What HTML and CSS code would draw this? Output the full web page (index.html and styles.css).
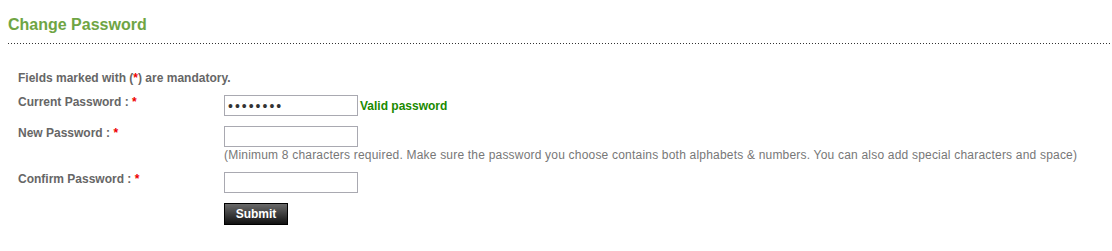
FILE: index.html
```html
<!DOCTYPE html>
<html lang="en">

<head>
    <meta charset="UTF-8">
    <title>Change Password</title>
    <link rel="stylesheet" href="styles.css">
</head>

<body>
    <div class="page">
        <h2 class="title">Change Password</h2>
        <div class="dots"></div>

        <form class="pwd-form">
            <p class="note">Fields marked with (<span class="req">*</span>) are mandatory.</p>

            <div class="row">
                <label class="label">Current Password : <span class="req">*</span></label>
                <div class="field">
                    <div class="inline">
                        <input type="password" class="box" value="secret12">
                        <span class="valid">Valid password</span>
                    </div>
                </div>
            </div>

            <div class="row">
                <label class="label">New Password : <span class="req">*</span></label>
                <div class="field">
                    <input type="password" class="box">
                    <p class="hint">(Minimum 8 characters required. Make sure the password you choose contains both alphabets &amp; numbers. You can also add special characters and space)</p>
                </div>
            </div>

            <div class="row">
                <label class="label">Confirm Password : <span class="req">*</span></label>
                <div class="field">
                    <input type="password" class="box">
                </div>
            </div>

            <div class="row">
                <div class="label"></div>
                <div class="field">
                    <button type="button" class="submit">Submit</button>
                </div>
            </div>
        </form>
    </div>
</body>

</html>
```

FILE: styles.css
```css
* {
    box-sizing: border-box;
    margin: 0;
}

body {
    background-color: #fff;
    font-family: 'Liberation Sans', Arial, sans-serif;
    color: #666;
}

.page {
    padding: 0 2px 0 8px;
}

.title {
    color: #6fa544;
    font-size: 16px;
    font-weight: bold;
    line-height: 20px;
    padding-top: 15px;
    padding-bottom: 8px;
}

.dots {
    height: 1px;
    background-image: repeating-linear-gradient(to right, #333 0, #333 1px, transparent 1px, transparent 3px);
}

.pwd-form {
    padding: 27px 0 0 10px;
    font-size: 12px;
}

.note {
    font-weight: bold;
    line-height: 14px;
    margin-bottom: 10px;
}

.req {
    color: #e00;
}

.row {
    display: flex;
    margin-bottom: 10px;
}

.label {
    width: 206px;
    flex-shrink: 0;
    font-weight: bold;
    padding-top: 0;
    line-height: 14px;
}

.inline {
    display: flex;
    align-items: center;
}

.box {
    width: 134px;
    height: 21px;
    border: 1px solid #a9a9b1;
    padding: 0 3px;
    font-size: 14px;
    color: #333;
    background: #fff;
    font-family: 'Liberation Sans', Arial, sans-serif;
    letter-spacing: 2px;
}

.valid {
    color: #1a8a00;
    font-weight: bold;
    font-size: 12px;
    margin-left: 2px;
}

.hint {
    line-height: 16px;
    color: #777;
    letter-spacing: 0.2px;
    margin-bottom: -1px;
}

.submit {
    display: block;
    width: 64px;
    height: 22px;
    border: 1px solid #000;
    background: linear-gradient(#6a6a6a, #111);
    color: #fff;
    font-weight: bold;
    font-size: 12px;
    font-family: 'Liberation Sans', Arial, sans-serif;
    padding: 0;
}
```
